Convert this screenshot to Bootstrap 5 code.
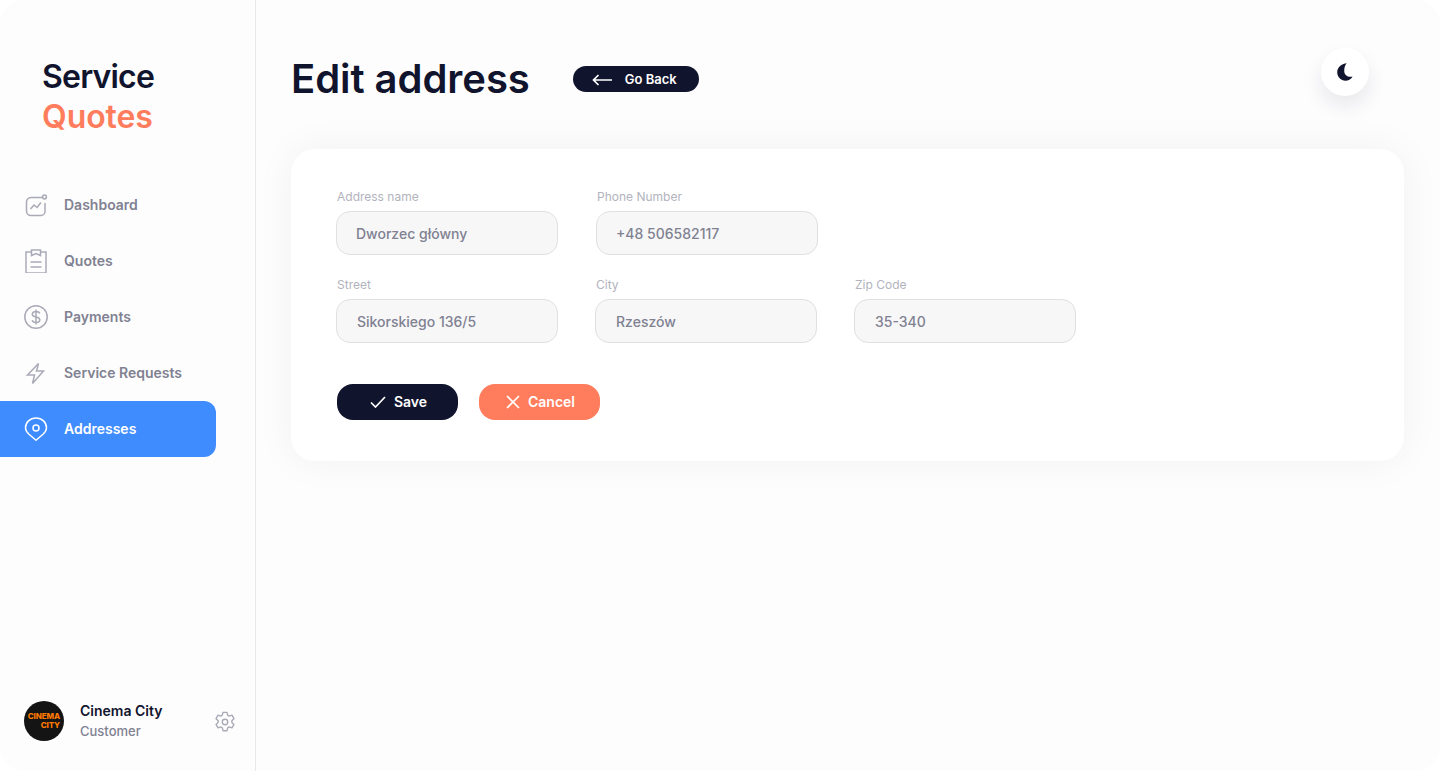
<!DOCTYPE html>
<html lang="en">
<head>
<meta charset="utf-8">
<title>Edit address</title>
<link href="https://cdn.jsdelivr.net/npm/bootstrap@5.3.0/dist/css/bootstrap.min.css" rel="stylesheet">
<style>
html,body{height:100%;background:#fff;font-family:Inter,"Liberation Sans",sans-serif;}
.shell{height:771px;width:1440px;background:#fdfdfe;border-radius:24px;overflow:hidden;}
.side{width:256px;flex:none;border-right:1px solid #e8e8ec;}
.brand{padding:57px 0 0 42px;font-family:Inter,"Liberation Sans",sans-serif;font-weight:600;font-size:32px;line-height:40px;letter-spacing:-.8px;color:#11142d;height:177px;}
.brand-accent{color:#ff7d5c;letter-spacing:-.1px;}
.menu{width:216px;}
.menu-link{height:56px;padding:0 0 1px 24px;gap:16px;font-size:14px;font-weight:600;color:#808191;text-decoration:none;border-radius:0 12px 12px 0;}
.menu-link svg{width:24px;height:24px;flex:none;stroke:#a9aab6;fill:none;stroke-width:1.5;margin-top:1px;}
.menu-on{background:#3f8cff;color:#fff;}
.menu-on svg{stroke:#fff;}
.who{padding:0 19px 30px 24px;}
.logo-dot{width:40px;height:40px;background:#141414;color:#ff7a00;font-size:8px;line-height:9px;font-weight:800;text-align:right;letter-spacing:-.1px;padding-right:4px;}
.who-name{font-size:14px;font-weight:600;color:#11142d;line-height:20px;}
.who-role{font-size:13px;font-weight:500;color:#808191;line-height:20px;}
.gear-ico{margin-top:2px;flex:none;}
.main-area{padding:0 36px 0 35px;}
.top{height:149px;padding:56px 35px 0 0;}
.page-title{font-family:Inter,"Liberation Sans",sans-serif;font-size:40px;line-height:46px;font-weight:600;letter-spacing:-.05px;color:#11142d;margin:0;}
.back-btn{height:26px;width:126px;margin:0 0 0 43px;background:#11142d;color:#fff;font-size:13px;font-weight:600;border:0;padding:1px 0 0 19px;gap:13px;}
.back-btn:hover{background:#11142d;color:#fff;}
.moon-btn{width:48px;height:48px;background:#fff;border:0;box-shadow:0 10px 20px rgba(17,20,45,.09);margin-top:-8px;}
.form-box{height:312px;border-radius:24px;background:#fff;border:0;box-shadow:0 0 40px rgba(17,20,45,.05);padding:40px 45px;}
.field{width:222px;}
.field-label{display:block;font-size:12px;line-height:16px;color:#b2b3bd;margin:0 0 6px 1px;}
.field-input{height:44px;border-radius:14px;border:1px solid #e0e0e4;background:#f7f7f8;font-size:14px;font-weight:500;color:#808191;padding:0 19px;}
.field-input:focus{background:#f7f7f8;color:#808191;border-color:#e0e0e4;box-shadow:none;}
.row-a{gap:38px;margin-bottom:22px;}
.row-b{gap:37px;margin-bottom:41px;}
.row-b .field-input{padding:0 20px;}
.act-btn{width:121px;height:36px;border:0;border-radius:16px;font-size:14px;font-weight:600;color:#fff;padding:0 0 2px 2px;gap:8px;margin-left:1px;}
.act-btn svg{margin-top:2px;}
.act-save{background:#11142d;}
.act-save:hover{background:#11142d;color:#fff;}
.act-cancel{background:#ff7d5c;margin-left:21px;}
.act-cancel:hover{background:#ff7d5c;color:#fff;}
</style>
</head>
<body>
<div class="shell d-flex">
  <aside class="side d-flex flex-column justify-content-between">
    <div>
      <div class="brand">Service<br><span class="brand-accent">Quotes</span></div>
      <nav class="menu d-flex flex-column">
        <a class="menu-link d-flex align-items-center" href="#"><svg viewBox="0 0 24 24"><path d="M18 4.500H7a4.500 4.500 0 0 0-4.500 4.500v9A4.500 4.500 0 0 0 7 22.500h10a4 4 0 0 0 4-4V10"/><path d="M6.500 16l3.500-4 3 2.500 4-5"/><circle cx="20.500" cy="4" r="1.900"/></svg>Dashboard</a>
        <a class="menu-link d-flex align-items-center" href="#"><svg viewBox="0 0 24 24"><path d="M7.500 3H2v21h20V3h-5.500"/><path d="M7.500 1h9v5.500l-4.500-2-4.500 2z"/><path d="M6.500 13h11M6.500 18h11"/></svg>Quotes</a>
        <a class="menu-link d-flex align-items-center" href="#"><svg viewBox="0 0 24 24"><circle cx="12" cy="12" r="11.200"/><path d="M15.800 8.500c-.5-1.300-2-2-3.800-2-2.100 0-3.700 1-3.700 2.800 0 4 7.500 1.500 7.500 5.400 0 1.800-1.700 2.800-3.800 2.800-1.900 0-3.400-.8-3.900-2.200M12 4.500v15"/></svg>Payments</a>
        <a class="menu-link d-flex align-items-center" href="#"><svg viewBox="0 0 24 24"><path d="M14.500 2.500 3.500 14h7l-2 8.500 11-12.500h-7z"/></svg>Service Requests</a>
        <a class="menu-link menu-on d-flex align-items-center" href="#"><svg viewBox="0 0 24 24"><path d="M12 23.200 5 17.300C2.800 15.300 1.500 13.500 1.500 10.800 1.500 5.300 6 1 12 1s10.500 4.300 10.500 9.800c0 2.700-1.300 4.500-3.500 6.500z"/><circle cx="12" cy="11" r="3"/></svg>Addresses</a>
      </nav>
    </div>
    <div class="who d-flex align-items-center">
      <div class="logo-dot rounded-circle d-flex flex-column justify-content-center flex-none"><span>CINEMA</span><span>CITY</span></div>
      <div class="ms-3 flex-grow-1"><div class="who-name">Cinema City</div><div class="who-role">Customer</div></div>
      <svg class="gear-ico" width="22" height="22" viewBox="0 0 24 24" fill="none" stroke="#a9aab6" stroke-width="1.500" stroke-linejoin="round"><circle cx="12" cy="12" r="3"/><path d="M9.800 1.500h4.400l.7 3.100 1.700 1 3-1 2.200 3.800-2.300 2.100v2l2.300 2.100-2.200 3.800-3-1-1.700 1-.7 3.100H9.800l-.7-3.100-1.700-1-3 1-2.200-3.800 2.300-2.100v-2L2.200 8.400l2.200-3.800 3 1 1.700-1z"/></svg>
    </div>
  </aside>
  <main class="main-area flex-grow-1">
    <header class="top d-flex justify-content-between align-items-start">
      <div class="d-flex align-items-center">
        <h1 class="page-title">Edit address</h1>
        <button class="btn back-btn rounded-pill d-flex align-items-center" type="button"><svg width="20" height="12" viewBox="0 0 20 12" fill="none" stroke="#fff" stroke-width="1.700"><path d="M20 6H1.500M6.500 1 1.500 6l5 5"/></svg>Go Back</button>
      </div>
      <button class="btn moon-btn rounded-circle d-flex align-items-center justify-content-center p-0" type="button" aria-label="Theme"><svg width="20" height="20" viewBox="0 0 18 18"><path fill="#11142d" d="M10.500 1.200C6.800 1.500 2 4 2 9.300 2 13.700 5.500 16.800 9.300 16.800c3 0 5.500-1.500 6.500-3.800-3.500 1-7.500-.8-7.500-5.200 0-3 1-5.200 2.200-6.600z"/></svg></button>
    </header>
    <section class="card form-box">
      <form>
        <div class="d-flex row-a">
          <div class="field"><label class="field-label" for="a1">Address name</label><input id="a1" class="form-control field-input" value="Dworzec główny"></div>
          <div class="field"><label class="field-label" for="a2">Phone Number</label><input id="a2" class="form-control field-input" value="+48 506582117"></div>
        </div>
        <div class="d-flex row-b">
          <div class="field"><label class="field-label" for="a3">Street</label><input id="a3" class="form-control field-input" value="Sikorskiego 136/5"></div>
          <div class="field"><label class="field-label" for="a4">City</label><input id="a4" class="form-control field-input" value="Rzeszów"></div>
          <div class="field"><label class="field-label" for="a5">Zip Code</label><input id="a5" class="form-control field-input" value="35-340"></div>
        </div>
        <div class="d-flex">
          <button class="btn act-btn act-save d-flex align-items-center justify-content-center" type="button"><svg width="16" height="12" viewBox="0 0 16 12" fill="none" stroke="#fff" stroke-width="1.700"><path d="M1 6.500 5.500 11 15 1"/></svg>Save</button>
          <button class="btn act-btn act-cancel d-flex align-items-center justify-content-center" type="button"><svg width="14" height="14" viewBox="0 0 14 14" fill="none" stroke="#fff" stroke-width="1.700"><path d="M1 1l12 12M13 1 1 13"/></svg>Cancel</button>
        </div>
      </form>
    </section>
  </main>
</div>
<script src="https://cdn.jsdelivr.net/npm/bootstrap@5.3.0/dist/js/bootstrap.bundle.min.js"></script>
</body>
</html>
